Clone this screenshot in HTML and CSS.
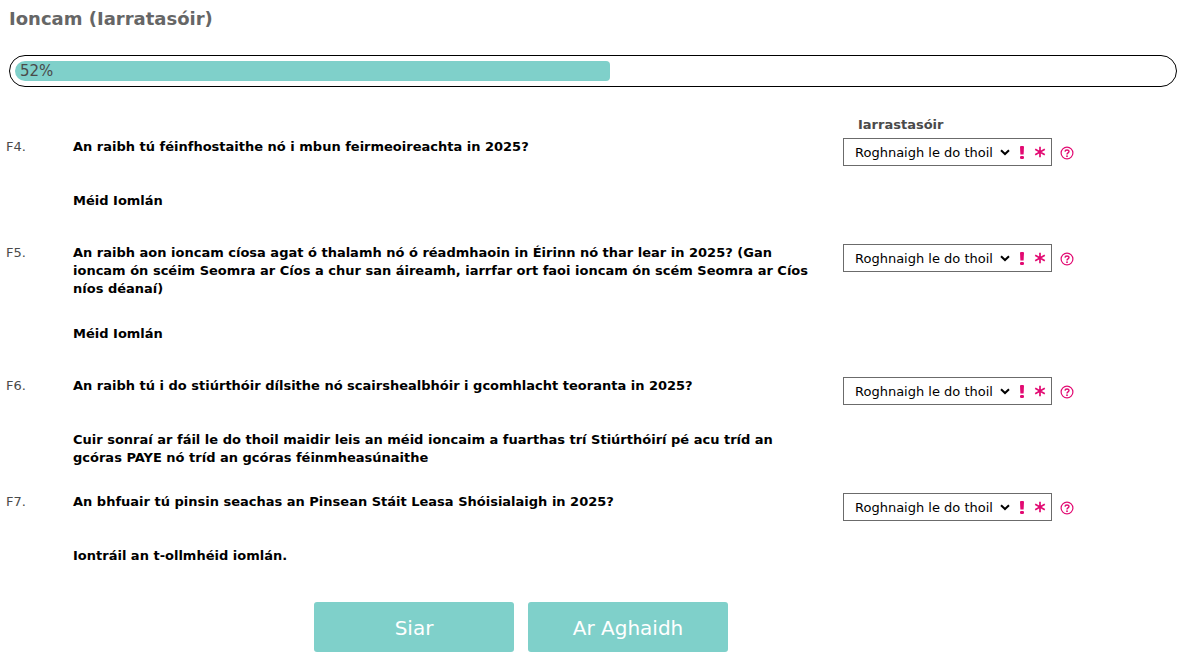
FILE: index.html
```html
<!DOCTYPE html>
<html lang="ga">
<head>
<meta charset="utf-8">
<title>Ioncam (Iarratasóir)</title>
<link rel="stylesheet" href="styles.css">
</head>
<body>
<svg class="symbols" aria-hidden="true">
  <symbol id="chevron" viewBox="0 0 10 7"><path d="M1 1.2 5 5 9 1.2" fill="none" stroke="#000" stroke-width="2"/></symbol>
  <symbol id="alert" viewBox="0 0 6 13"><path d="M1 1Q1 0 2 0H4Q5 0 5 1L4.600 8.500H1.400Z"/><rect x="1" y="10" width="4" height="3" rx="1.200"/></symbol>
  <symbol id="required" viewBox="0 0 12 12"><path d="M6 .8v10.400M1.200 3.300l9.600 5.400M10.800 3.300 1.200 8.700" fill="none" stroke="currentColor" stroke-width="1.700"/></symbol>
  <symbol id="help" viewBox="0 0 14 14"><circle cx="7" cy="7" r="5.900" fill="none" stroke="currentColor" stroke-width="1.200"/><path d="M5 5.600C5.100 3.400 9 3.400 9 5.500 9 6.900 7 6.900 7 8.400" fill="none" stroke="currentColor" stroke-width="1.400"/><circle cx="7" cy="10.200" r=".9"/></symbol>
</svg>
<main class="page">
  <h1 class="title">Ioncam (Iarratasóir)</h1>
  <div class="progress" role="progressbar" aria-valuenow="52" aria-valuemin="0" aria-valuemax="100">
    <div class="progress-bar">52%</div>
  </div>
  <form class="form">
    <div class="row"><div class="column-title">Iarrastasóir</div></div>

    <div class="row">
      <span class="number">F4.</span>
      <label class="question" for="f4">An raibh tú féinfhostaithe nó i mbun feirmeoireachta in 2025?</label>
      <div class="control">
        <div class="field"><select id="f4" class="select"><option>Roghnaigh le do thoil</option></select><svg class="chevron"><use href="#chevron"/></svg><svg class="alert"><use href="#alert"/></svg><svg class="required"><use href="#required"/></svg></div>
        <button type="button" class="help" aria-label="Cabhair"><svg class="help-icon"><use href="#help"/></svg></button>
      </div>
      <p class="detail">Méid Iomlán</p>
    </div>

    <div class="row">
      <span class="number">F5.</span>
      <label class="question" for="f5">An raibh aon ioncam cíosa agat ó thalamh nó ó réadmhaoin in Éirinn nó thar lear in 2025? (Gan ioncam ón scéim Seomra ar Cíos a chur san áireamh, iarrfar ort faoi ioncam ón scém Seomra ar Cíos níos déanaí)</label>
      <div class="control">
        <div class="field"><select id="f5" class="select"><option>Roghnaigh le do thoil</option></select><svg class="chevron"><use href="#chevron"/></svg><svg class="alert"><use href="#alert"/></svg><svg class="required"><use href="#required"/></svg></div>
        <button type="button" class="help" aria-label="Cabhair"><svg class="help-icon"><use href="#help"/></svg></button>
      </div>
      <p class="detail">Méid Iomlán</p>
    </div>

    <div class="row">
      <span class="number">F6.</span>
      <label class="question" for="f6">An raibh tú i do stiúrthóir dílsithe nó scairshealbhóir i gcomhlacht teoranta in 2025?</label>
      <div class="control">
        <div class="field"><select id="f6" class="select"><option>Roghnaigh le do thoil</option></select><svg class="chevron"><use href="#chevron"/></svg><svg class="alert"><use href="#alert"/></svg><svg class="required"><use href="#required"/></svg></div>
        <button type="button" class="help" aria-label="Cabhair"><svg class="help-icon"><use href="#help"/></svg></button>
      </div>
      <p class="detail">Cuir sonraí ar fáil le do thoil maidir leis an méid ioncaim a fuarthas trí Stiúrthóirí pé acu tríd an gcóras PAYE nó tríd an gcóras féinmheasúnaithe</p>
    </div>

    <div class="row">
      <span class="number">F7.</span>
      <label class="question" for="f7">An bhfuair tú pinsin seachas an Pinsean Stáit Leasa Shóisialaigh in 2025?</label>
      <div class="control">
        <div class="field"><select id="f7" class="select"><option>Roghnaigh le do thoil</option></select><svg class="chevron"><use href="#chevron"/></svg><svg class="alert"><use href="#alert"/></svg><svg class="required"><use href="#required"/></svg></div>
        <button type="button" class="help" aria-label="Cabhair"><svg class="help-icon"><use href="#help"/></svg></button>
      </div>
      <p class="detail">Iontráil an t-ollmhéid iomlán.</p>
    </div>

    <div class="actions">
      <button type="button" class="action">Siar</button>
      <button type="button" class="action">Ar Aghaidh</button>
    </div>
  </form>
</main>
</body>
</html>
```
FILE: styles.css
```css
* { box-sizing: border-box; }
body {
  margin: 0;
  background: #fff;
  color: #4a4a4a;
  font: 13px/18px Verdana, "DejaVu Sans", sans-serif;
}
.symbols { display: none; }
.page { padding: 8px 6px 0; }
.title {
  margin: 0 3px;
  color: #666;
  font-size: 18px;
  line-height: 22px;
}
.progress {
  margin: 25px 1px 29px 3px;
  padding: 5px;
  border: 1px solid #000;
  border-radius: 16px;
}
.progress-bar {
  width: calc(52% - 6px);
  padding-left: 5px;
  border-radius: 10px 4px 4px 10px;
  background: #7fd0ca;
  font-size: 15px;
  line-height: 20px;
}
.row {
  display: grid;
  grid-template-columns: 67px minmax(0, 1fr) 335px;
}
.column-title {
  grid-column: 3;
  padding-left: 15px;
  font-weight: bold;
}
.number, .question, .detail { padding-top: 4px; }
.question, .detail {
  margin: 0;
  padding-right: 20px;
  color: #000;
  font-weight: bold;
}
.question { min-height: 54px; padding-bottom: 23px; }
.detail { grid-column: 2; min-height: 52px; padding-bottom: 22px; }
.control {
  display: flex;
  align-items: center;
  align-self: start;
  gap: 8px;
  padding-top: 4px;
}
.field {
  display: flex;
  align-items: center;
  width: 209px;
  height: 28px;
  padding-left: 11px;
  border: 1px solid #6b6b6b;
  color: #e20a72;
}
.select {
  appearance: none;
  width: 163px;
  height: 26px;
  margin-right: -18px;
  padding: 2px 0 0;
  border: 0;
  background: transparent;
  color: #000;
  font: inherit;
}
.field svg { flex: none; pointer-events: none; fill: currentColor; }
.chevron { width: 10px; height: 7px; }
.alert { width: 6px; height: 13px; margin-left: 9px; }
.required { width: 12px; height: 12px; margin-left: 9px; }
.help {
  display: flex;
  padding: 1px 0 0;
  border: 0;
  background: none;
  color: #e20a72;
}
.help-icon { width: 14px; height: 14px; fill: currentColor; }
.actions {
  display: flex;
  justify-content: center;
  gap: 14px;
  padding: 7px 142px 0 0;
}
.action {
  width: 200px;
  height: 50px;
  padding: 2px 0 0;
  border: 0;
  border-radius: 3px;
  background: #7fd0ca;
  color: #fff;
  font: 20px/24px Verdana, "DejaVu Sans", sans-serif;
}
```
